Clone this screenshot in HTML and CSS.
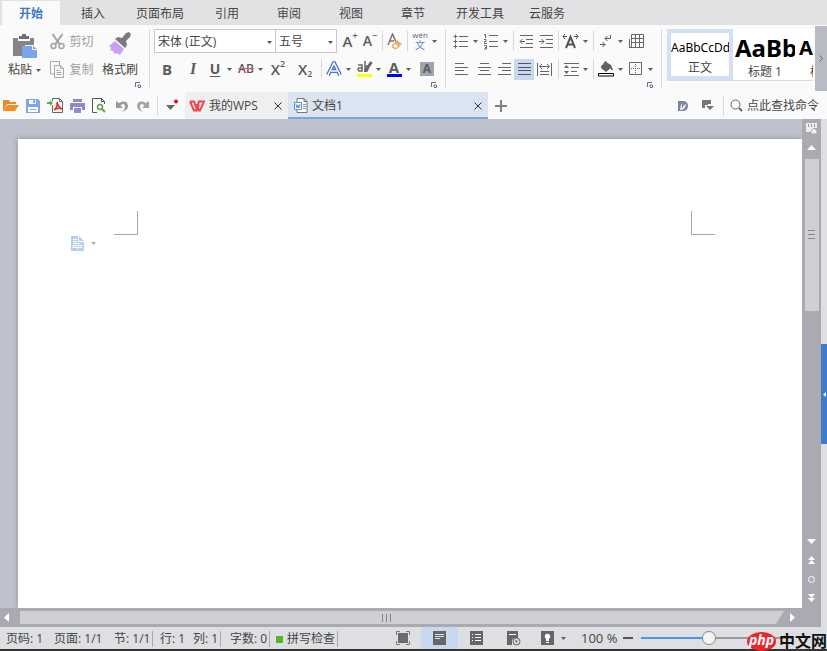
FILE: index.html
```html
<!DOCTYPE html>
<html lang="zh-CN">
<head>
<meta charset="utf-8">
<title>文档1</title>
<link rel="stylesheet" href="styles.css">
</head>
<body>
<svg class="defs" aria-hidden="true">
  <symbol id="arrow" viewBox="0 0 5 3"><path d="M0 0h5L2.500 3z" fill="#5d5d5d"/></symbol>
  <symbol id="launch" viewBox="0 0 6 6"><path d="M.5 5V.5H5M5.500 3v2.500H3M3 5V3h2" fill="none" stroke="#66708c"/></symbol>
  <symbol id="close" viewBox="0 0 8 8"><path d="M.5.5l7 7M7.500.5l-7 7" stroke="#333" fill="none"/></symbol>
</svg>

<nav class="tabs">
  <button class="tab current">开始</button><button class="tab">插入</button><button class="tab wide">页面布局</button><button class="tab">引用</button><button class="tab">审阅</button><button class="tab">视图</button><button class="tab">章节</button><button class="tab wide">开发工具</button><button class="tab">云服务</button>
</nav>

<section class="ribbon">
  <div class="group clipboard">
    <button class="big paste">
      <svg width="26" height="24"><path d="M1 4h5v3h12V4h4v7h-9v11H1z" fill="#858585"/><path d="M7 5V2h3V0h4v2h3v3z" fill="#707070"/><path d="M10 12h10v4h5v8H10z" fill="#7da4ea"/><path d="M21 12l4 3h-4z" fill="#7da4ea"/></svg>
      <span>粘贴 <svg width="5" height="3"><use href="#arrow"/></svg></span>
    </button>
    <div class="stack">
      <button class="line"><svg width="15" height="17" fill="none" stroke="#a2a2a2"><path d="M2.500 1l7 10M12.500 1l-7 10" stroke-width="2"/><circle cx="3.500" cy="13" r="2.500" stroke-width="1.500"/><circle cx="11.500" cy="13" r="2.500" stroke-width="1.500"/></svg>剪切</button>
      <button class="line"><svg width="15" height="17" fill="none" stroke="#a8a8a8"><path d="M4 13H.5V.5h9V4"/><path d="M4.500 4.500h6l3 3v9h-9zM10.500 4.500v3h3M6.500 9.500h4M6.500 11.500h5M6.500 13.500h5"/></svg>复制</button>
    </div>
    <button class="big painter">
      <svg width="24" height="24"><path d="M18 1l3-1 2 2-1 3-4 4 1 4-2 3-10-9 3-2 4 1z" fill="#7b7b7b"/><path d="M7 9l9 8-4 6-3-2-2 1-2-3-3-1 1-2-2-2z" fill="#c9a0f2"/></svg>
      <span>格式刷</span>
    </button>
    <button class="launcher" aria-label="剪贴板"><svg width="6" height="6"><use href="#launch"/></svg></button>
  </div>

  <div class="group font">
    <div class="row font-top">
      <label class="combo"><select aria-label="字体"><option>宋体 (正文)</option></select><svg width="5" height="3"><use href="#arrow"/></svg></label>
      <label class="combo"><select aria-label="字号"><option>五号</option></select><svg width="5" height="3"><use href="#arrow"/></svg></label>
      <i></i>
      <button class="tool glyph" aria-label="增大字号">A<sup>+</sup></button>
      <button class="tool glyph small" aria-label="减小字号">A<sup>−</sup></button>
      <i class="sep"></i>
      <button class="tool" aria-label="清除格式"><svg width="16" height="17" fill="none"><path d="M1 12L5.500 1 9 9M3 8h4" stroke="#777" stroke-width="1.500"/><path d="M5 12l5-5 5 4-5 5-2 .5-3-2z" fill="#f2ad69"/><path d="M6 13l2-2 3 2-2 2z" fill="#fff"/></svg></button>
      <i class="sep"></i>
      <button class="tool menu" aria-label="拼音指南"><span class="pinyin"><b>wén</b><span>文</span></span><svg width="5" height="3"><use href="#arrow"/></svg></button>
    </div>
    <div class="row font-bottom">
      <button class="tool letter">B</button>
      <button class="tool letter italic">I</button>
      <button class="tool menu letter"><u>U</u><svg width="5" height="3"><use href="#arrow"/></svg></button>
      <button class="tool menu struck"><s>AB</s><svg width="5" height="3"><use href="#arrow"/></svg></button>
      <button class="tool glyph">X<sup>2</sup></button>
      <button class="tool glyph">X<sub>2</sub></button>
      <i class="sep"></i>
      <button class="tool menu" aria-label="文字效果"><svg width="16" height="16" fill="none"><path d="M2 14L8 2l6 12M5 10h6" stroke="#4674c5" stroke-width="4"/><path d="M2 14L8 2l6 12M5 10h6" stroke="#fff" stroke-width="1.500"/></svg><svg width="5" height="3"><use href="#arrow"/></svg></button>
      <button class="tool menu" aria-label="突出显示"><span class="mark yellow"><svg width="16" height="11" fill="none"><path d="M1 4h4v6H2Q0 8 2 7h3M8 0v10h2q2-3 0-5H8" stroke="#666" stroke-width="1.500"/><path d="M14.500 1L9 9l-1 2" stroke="#666" stroke-width="3"/></svg></span><svg width="5" height="3"><use href="#arrow"/></svg></button>
      <button class="tool menu" aria-label="字体颜色"><span class="mark blue">A</span><svg width="5" height="3"><use href="#arrow"/></svg></button>
      <button class="tool"><span class="shade">A</span></button>
    </div>
    <button class="launcher" aria-label="字体设置"><svg width="6" height="6"><use href="#launch"/></svg></button>
  </div>

  <div class="group para">
    <div class="row para-top">
      <button class="tool menu" aria-label="项目符号"><svg width="16" height="15" stroke="#666" fill="none"><path d="M6 2.500h9M6 7.500h9M6 12.500h9"/><path d="M.5 2.500h4M.5 7.500h4M.5 12.500h4M2.500.5v4M2.500 5.500v4M2.500 10.500v4"/></svg><svg width="5" height="3"><use href="#arrow"/></svg></button>
      <button class="tool menu" aria-label="编号"><svg width="16" height="17" stroke="#666" fill="none"><path d="M6 2.500h9M6 8.500h9M6 13.500h9M1 1.500h1.500V5M1 6.500h2v2H1.500v2H4M1 12.500h2.500v3.500H1M2 14.500h1"/></svg><svg width="5" height="3"><use href="#arrow"/></svg></button>
      <i class="sep"></i>
      <button class="tool" aria-label="减少缩进"><svg width="14" height="13" stroke="#666" fill="none"><path d="M1 .5h13M7 4.500h7M7 8.500h7M1 12.500h13M1 6.500h5M3.500 4L1 6.500 3.500 9"/></svg></button>
      <button class="tool" aria-label="增加缩进"><svg width="14" height="13" stroke="#666" fill="none"><path d="M1 .5h13M7 4.500h7M7 8.500h7M1 12.500h13M0 6.500h5M2.500 4L5 6.500 2.500 9"/></svg></button>
      <i class="sep"></i>
      <button class="tool menu" aria-label="字符缩放"><svg width="18" height="16" fill="none" stroke="#555"><path d="M4 15L8.500 4 13 15M5.500 11.500h6" stroke-width="2"/><path d="M1 3.500h4M3 1L1 3.500 3 6M12 3.500h4M14 1l2 2.500L14 6"/></svg><svg width="5" height="3"><use href="#arrow"/></svg></button>
      <i class="sep"></i>
      <button class="tool menu" aria-label="显示标记"><svg width="12" height="14" stroke="#555" fill="none"><path d="M10.500 1v3.500H5M7.500 2L5 4.500 7.500 7M0 10.500h5M2.500 8L5 10.500 2.500 13"/></svg><svg width="5" height="3"><use href="#arrow"/></svg></button>
      <button class="tool" aria-label="表格"><svg width="15" height="15" stroke="#666" fill="none"><path d="M2.500.5h12v13h-12zM2 4.500h12M2 8.500h12M6.500 0v14M10.500 0v14M.5 5v9M0 13.500h3"/></svg></button>
    </div>
    <div class="row para-bottom">
      <button class="tool" aria-label="左对齐"><svg width="13" height="12" stroke="#666"><path d="M0 .5h9M0 4.500h13M0 7.500h9M0 11.500h13"/></svg></button>
      <button class="tool" aria-label="居中"><svg width="13" height="12" stroke="#666"><path d="M2 .5h9M0 4.500h13M2 7.500h9M0 11.500h13"/></svg></button>
      <button class="tool" aria-label="右对齐"><svg width="13" height="12" stroke="#666"><path d="M4 .5h9M0 4.500h13M4 7.500h9M0 11.500h13"/></svg></button>
      <button class="tool on" aria-label="两端对齐"><svg width="13" height="12" stroke="#555"><path d="M0 .5h13M0 4.500h13M0 7.500h13M0 11.500h13"/></svg></button>
      <button class="tool" aria-label="分散对齐"><svg width="15" height="13" stroke="#666" fill="none"><path d="M.5 0v13M14.500 0v13M3 3.500h9M5 1L2.500 3.500 5 6M10 1l2.500 2.500L10 6M3 8.500h9M3 11.500h9"/></svg></button>
      <i class="sep"></i>
      <button class="tool menu" aria-label="行距"><svg width="15" height="13" stroke="#666" fill="none"><path d="M0 .5h15M7 4.500h8M7 8.500h6M0 12.500h15"/><path d="M0 5h5L2.500 2zM0 8h5l-2.500 3z" fill="#666" stroke="none"/></svg><svg width="5" height="3"><use href="#arrow"/></svg></button>
      <i class="sep"></i>
      <button class="tool menu" aria-label="底纹"><svg width="16" height="16"><path d="M3 5l5-4 5 3 2 5h-2V7l-5 4-5-4zM5 3l2-3 2 1z" fill="#606060"/><path d="M.5 12.500h15v2.500H.5z" fill="#fff" stroke="#000"/></svg><svg width="5" height="3"><use href="#arrow"/></svg></button>
      <button class="tool menu" aria-label="边框"><svg width="14" height="14" fill="none" stroke="#666"><path d="M.5.5h12v12H.5z"/><path d="M6.500 2v10M2 6.500h10" stroke-dasharray="1 1"/></svg><svg width="5" height="3"><use href="#arrow"/></svg></button>
    </div>
    <button class="launcher" aria-label="段落设置"><svg width="6" height="6"><use href="#launch"/></svg></button>
  </div>

  <div class="styles">
    <button class="style chosen"><span class="sample">AaBbCcDd</span><span>正文</span></button>
    <button class="style"><span class="sample heading">AaBb</span><span>标题 1</span></button>
    <button class="style cut"><span class="sample medium">Aa</span><span class="name">标题 2</span></button>
  </div>
  <button class="more" aria-label="更多"><svg width="4" height="7" fill="none" stroke="#666"><path d="M.5.5l3 3-3 3"/></svg></button>
</section>

<section class="quick">
  <div class="files">
    <button aria-label="打开"><svg width="16" height="13"><path d="M0 12V1h6l1 2h6v2H4z" fill="#e88929"/><path d="M4 6h12l-4 6H0z" fill="#f58d21"/></svg></button>
    <button aria-label="保存"><svg width="14" height="14"><path d="M0 0h12l2 2v12H0z" fill="#7da5ea"/><path d="M3 1h7v4H3zM2 8h10v5H2z" fill="#fff"/><path d="M7 1h2v3H7zM4 10h6v1H4z" fill="#7da5ea"/></svg></button>
    <button aria-label="输出PDF"><svg width="17" height="15" fill="none"><path d="M5.500 7v7.500h10v-11l-3-3h-7V3M12.500.5v3h3" stroke="#666"/><path d="M0 4h3V2l3 3-3 3V6H0z" fill="#68a74c"/><path d="M7 12q4-3 3-8 1 5 5 7-4-2-8 1" stroke="#e02b20" stroke-width="1.500"/></svg></button>
    <button aria-label="打印"><svg width="15" height="14" fill="#8f8aca"><path d="M3 0h9v3H3zM0 4h15v7h-3V8H3v3H0zM4 9h7v5H4z"/></svg></button>
    <button aria-label="打印预览"><svg width="14" height="15" fill="none"><path d="M5 14.500H.5V.5h9l3 3V6M9.500.5v3h3" stroke="#555"/><circle cx="8" cy="9" r="2.500" stroke="#64a64b" stroke-width="1.500"/><path d="M10 11l3 3" stroke="#64a64b" stroke-width="2"/></svg></button>
    <button aria-label="撤销"><svg width="13" height="14"><path d="M1 2v7h7L5.500 6.500Q10 3 10 8q0 3-3 5 6-2 6-6Q12 0 4 4z" fill="#999"/></svg></button>
    <button aria-label="恢复"><svg width="13" height="14"><path d="M12 2v7H5l2.500-2.500Q3 3 3 8q0 3 3 5-6-2-6-6Q1 0 9 4z" fill="#a4a4a4"/></svg></button>
  </div>
  <i class="sep"></i>
  <button class="custom" aria-label="自定义"><svg width="14" height="14"><path d="M1 6h9l-4.500 5z" fill="#666"/><circle cx="11" cy="2.500" r="2" fill="#f00"/></svg></button>
  <div class="doc home"><svg width="16" height="12" fill="none" stroke="#f0484c"><path d="M1 1.500h4l3 8 2-5M1 1.500l4 9h2l3-9h5l-4 9h-1L7.500 4" stroke-width="2"/></svg><span>我的WPS</span><button aria-label="关闭"><svg width="8" height="8"><use href="#close"/></svg></button></div>
  <div class="doc active"><svg width="14" height="15" fill="none"><path d="M3 4V.5h7l3 3v11H3V12M10 .5v3h3" stroke="#777" fill="#fff"/><path d="M9 6.500h3M9 8.500h3M9 10.500h3" stroke="#999"/><path d="M.5 4.500h7v7h-7z" fill="#fff" stroke="#5c8fd6"/><path d="M2 6l1 4 1-3 1 3 1-4" stroke="#5c8fd6"/></svg><span>文档1</span><button aria-label="关闭"><svg width="8" height="8"><use href="#close"/></svg></button></div>
  <button class="add" aria-label="新建"><svg width="12" height="12" stroke="#808080" stroke-width="2"><path d="M0 6h12M6 0v12"/></svg></button>
  <div class="find">
    <button aria-label="文档服务"><svg width="10" height="10"><path d="M0 0h6q4 1 4 5t-4 5H0z" fill="#7e8497"/><path d="M2 9q0-4 2-7v6Q5 4 8 3 8 7 4 9" fill="#e8eaf0"/></svg></button>
    <button aria-label="皮肤"><svg width="13" height="11" fill="#777"><path d="M1 0h9v4H7v1H4v3H1zM5 6h8L9 10z"/></svg></button>
    <i class="sep"></i>
    <label for="command"><svg width="13" height="13" fill="none" stroke="#666"><circle cx="5.500" cy="5.500" r="4.500"/><path d="M9 9l3 3" stroke-width="2"/></svg></label>
    <input id="command" type="text" placeholder="点此查找命令">
  </div>
</section>

<main class="work">
  <div class="canvas">
    <article class="page">
      <div class="corners"><i class="corner"></i><i class="corner right"></i></div>
      <button class="section" aria-label="段落布局"><svg width="13" height="15"><path d="M0 0h8l5 5v10H0z" fill="#b8cdea"/><path d="M7.500 0v5.500H13M2 3.500h4M2 5.500h4M2 7.500h7M2 9.500h9v2H2zM6.500 11v2" fill="none" stroke="#fff"/></svg><svg width="5" height="3"><path d="M0 0h5L2.500 3z" fill="#aaa"/></svg></button>
    </article>
    <div class="vbar">
      <button class="ruler" aria-label="标尺"><svg width="12" height="12"><path d="M0 0h11v5H9L5 9H0z" fill="#eee"/><path d="M2.500 1v3M5.500 1v3M8.500 1v3" stroke="#999"/><path d="M5 11h6V8L8 5 5 8z" fill="#eee" stroke="#aaa"/></svg></button>
      <button aria-label="上"><svg width="9" height="5"><path d="M0 5h9L4.500 0z" fill="#fff"/></svg></button>
      <div class="thumb"><svg width="7" height="10" stroke="#888"><path d="M0 .5h7M0 4.500h7M0 8.500h7"/></svg></div>
      <div class="jump">
        <button aria-label="下"><svg width="9" height="5"><path d="M0 0h9L4.500 5z" fill="#fff"/></svg></button>
        <button aria-label="上一页"><svg width="7" height="9" fill="#fff"><path d="M0 4h7L3.500 0zM0 8h7L3.500 4z"/></svg></button>
        <button aria-label="选择对象"><svg width="7" height="7" fill="none" stroke="#fff"><circle cx="3.500" cy="3.500" r="3"/></svg></button>
        <button aria-label="下一页"><svg width="7" height="9" fill="#fff"><path d="M0 0h7L3.500 4zM0 4h7L3.500 8z"/></svg></button>
      </div>
    </div>
    <div class="hbar">
      <button aria-label="左"><svg width="5" height="9"><path d="M5 0v9L0 4.500z" fill="#fff"/></svg></button>
      <div class="hthumb"><svg width="10" height="8" stroke="#888"><path d="M.5 0v8M4.500 0v8M8.500 0v8"/></svg></div>
      <button class="next" aria-label="右"><svg width="5" height="9"><path d="M0 0v9l5-4.500z" fill="#fff"/></svg></button>
    </div>
  </div>
  <aside class="rail"><button aria-label="展开任务窗格"><svg width="3" height="5"><path d="M3 0v5L0 2.500z" fill="#fff"/></svg></button></aside>
</main>

<footer class="status">
  <div class="counts"><span>页码: 1</span><span>页面: 1/1</span><span class="rule">节: 1/1</span><span>行: 1</span><span class="rule">列: 1</span><span class="rule">字数: 0</span><span class="rule spell"><i></i>拼写检查</span></div>
  <div class="views">
    <button aria-label="全屏"><svg width="14" height="14"><path d="M2 2h10v10H2z" fill="#6b6b6b"/><path d="M.5 4V.5H4M10 .5h3.500V4M.5 10v3.500H4M10 13.500h3.500V10" fill="none" stroke="#777"/></svg></button>
    <button class="on" aria-label="页面视图"><svg width="13" height="14"><path d="M0 0h13v14H0z" fill="#666"/><path d="M2 3.500h9M2 5.500h9M2 7.500h5" stroke="#d7e3f5"/></svg></button>
    <button aria-label="大纲视图"><svg width="13" height="14"><path d="M0 0h13v14H0z" fill="#666"/><path d="M2 3.500h1M2 6.500h1M2 9.500h1M5 3.500h6M5 6.500h6M5 9.500h6" stroke="#fff"/></svg></button>
    <button aria-label="网页视图"><svg width="14" height="15"><path d="M0 0h11v7H7L5 9v5H0z" fill="#666"/><path d="M2 3.500h7" stroke="#fff"/><circle cx="9.500" cy="10.500" r="3.500" fill="#ddd" stroke="#666"/><path d="M8 9l3 1-2 2z" fill="#666"/></svg></button>
    <button class="care" aria-label="护眼模式"><svg width="13" height="14"><path d="M0 0h13v14H0z" fill="#666"/><path d="M5 10V8Q3 6 4 4q2-3 5 0 1 2-1 4v2zM5 11h3v1H5z" fill="#fff"/></svg><svg width="5" height="3"><use href="#arrow"/></svg></button>
  </div>
  <label class="percent" for="zoom">100 %</label>
  <button class="minus" aria-label="缩小"></button>
  <input id="zoom" type="range" min="0" max="100" value="44">
  <div class="brand"><b>php</b><span>中文网</span></div>
</footer>
</body>
</html>
```
FILE: styles.css
```css
* { box-sizing: border-box; }
body {
  margin: 0;
  height: 100vh;
  overflow: hidden;
  display: flex;
  flex-direction: column;
  background: #fafafa;
  color: #444;
  font: 12px/16px "Open Sans", "Noto Sans CJK SC", sans-serif;
}
button, select, input { font: inherit; color: inherit; border: 0; padding: 0; margin: 0; background: none; }
button { display: flex; align-items: center; justify-content: center; white-space: nowrap; }
svg { display: block; flex: none; }
.defs { position: absolute; width: 0; height: 0; }

.tabs { display: flex; height: 25px; flex: none; background: #e2e2e5; padding-left: 2px; }
.tab { width: 62px; padding-top: 2px; }
.tab.wide { width: 72px; }
.tab.current { width: 58px; background: #fafafa; color: #3c78c8; font-weight: 600; margin: 1px 2px 0 0; }

.ribbon { display: flex; height: 67px; flex: none; }
.group { position: relative; flex: none; margin-top: 4px; height: 59px; border-right: 1px solid #dcdcdc; }
.launcher { position: absolute; right: 8px; bottom: 0; }
.sep { width: 1px; height: 20px; background: #d8d8d8; }
.clipboard { display: flex; width: 150px; }
.big { flex-direction: column; justify-content: flex-start; height: 52px; padding-top: 5px; gap: 4px; }
.big span { display: flex; align-items: center; gap: 4px; }
.paste { width: 49px; }
.painter { width: 50px; padding-top: 3px; gap: 6px; }
.stack { width: 46px; }
.line { height: 24px; width: 46px; margin-bottom: 4px; padding-top: 1px; gap: 4px; color: #a0a0a0; }

.font { width: 296px; padding-left: 4px; }
.para { width: 216px; padding-left: 5px; }
.row { display: grid; height: 24px; margin-bottom: 4px; align-items: center; }
.font-top { grid-template-columns: 122px 61px 3px 20px 22px 3px 22px 3px 30px; }
.font-bottom { grid-template-columns: 26px 22px 31px 32px 27px 26px 3px 30px 30px 33px 20px; padding-left: 3px; }
.para-top { grid-template-columns: 30px 32px 3px 20px 22px 3px 32px 3px 30px 20px; }
.para-bottom { grid-template-columns: 23px 20px 20px 20px 24px 3px 32px 3px 30px 30px; }
.combo { position: relative; display: block; height: 24px; border: 1px solid #c9c9c9; background: #fff; }
.combo + .combo { margin-left: -1px; }
.combo select { appearance: none; width: 100%; height: 22px; padding: 1px 0 0 3px; display: block; }
.combo svg { position: absolute; right: 3px; top: 11px; }
.tool { width: 20px; height: 21px; color: #5c5c5c; }
.tool.menu { width: 30px; display: grid; grid-template-columns: 20px 5px; column-gap: 2px; justify-items: center; justify-content: start; }
.on { background: #c8d9ef; }
.glyph { font-weight: 600; font-size: 15px; }
.glyph.small { font-size: 14px; }
.glyph sup { font-size: 9px; line-height: 10px; align-self: flex-start; }
.glyph sub { font-size: 8px; line-height: 8px; align-self: flex-end; margin-bottom: 2px; }
.letter { font: bold 15px/16px "Open Sans", sans-serif; }
.italic { font: italic bold 16px/16px "Liberation Serif", serif; }
.letter u { font-size: 14px; text-underline-offset: 2px; }
.struck s { font-size: 12px; font-weight: 600; text-decoration-color: #e55; }
.pinyin { display: flex; flex-direction: column; align-items: center; color: #5b86cc; font-size: 10px; line-height: 12px; }
.pinyin b { color: #666; font-weight: 400; font-size: 8px; line-height: 8px; }
.mark { width: 15px; height: 16px; font: bold 15px/12px "Open Sans", sans-serif; border-bottom: 3px solid; text-align: center; }
.yellow { border-color: #ff0; }
.blue { border-color: #00f; }
.shade { width: 14px; height: 14px; background: #a0a4ad; font: bold 12px/14px "Open Sans", sans-serif; }

.styles { display: flex; flex: 1; min-width: 0; overflow: hidden; margin: 4px 2px 0 5px; height: 52px; background: #fff; border-bottom: 1px solid #dcdcdc; }
.style { flex: none; width: 66px; flex-direction: column; justify-content: flex-start; padding: 4px 4px 0 2px; overflow: hidden; }
.style.chosen { border: 4px solid #d3dff4; padding: 0; }
.style.cut { align-items: flex-start; padding-left: 0; }
.sample { width: 100%; height: 31px; line-height: 29px; overflow: hidden; color: #000; text-align: left; font-family: "Noto Sans", sans-serif; }
.sample.heading { font-weight: 700; font-size: 24px; }
.sample.medium { font-weight: 700; font-size: 20px; }
.style .name { padding-left: 11px; }
.more { flex: none; width: 12px; background: #b8bbc4; margin: 1px 0; }

.quick { display: flex; align-items: center; height: 27px; flex: none; }
.files { display: flex; }
.files button { width: 22px; height: 27px; }
.quick > .sep { margin-left: 3px; }
.custom { width: 27px; }
.doc { display: flex; align-items: center; height: 27px; padding: 0 6px; background: #efefef; gap: 4px; flex: none; }
.doc button { margin-left: auto; }
.home { width: 103px; padding-left: 4px; }
.doc.active { width: 200px; padding-top: 2px; background: #dbe5f1; border-bottom: 2px solid #7ca3dc; }
.add { width: 26px; }
.find { display: flex; align-items: center; margin-left: auto; gap: 6px; padding-right: 6px; }
.find button { width: 19px; }
.find input { width: 74px; margin-left: -2px; outline: 0; }
.find input::placeholder { color: #444; opacity: 1; }

.work { display: flex; flex: 1; min-height: 0; }
.canvas { flex: 1; min-width: 0; display: grid; grid-template: minmax(0, 1fr) 19px / minmax(0, 1fr) 19px; background: #bfc2cc; }
.page { margin: 20px 0 0 18px; padding-top: 72px; background: #fff; box-shadow: 0 0 6px #8c8e98; clip-path: inset(-6px 0 0 -6px); }
.corners { display: flex; justify-content: space-between; padding: 0 87px 0 96px; }
.corner { width: 24px; height: 24px; border: solid #a8a8a8; border-width: 0 1px 1px 0; }
.corner.right { border-width: 0 0 1px 1px; }
.section { margin: 1px 0 0 53px; gap: 7px; }
.vbar { display: flex; flex-direction: column; align-items: center; background: #aaaab3; }
.vbar button { height: 19px; width: 19px; }
.thumb { width: 14px; height: 152px; margin-top: 2px; background: #cfd0d4; display: flex; align-items: center; justify-content: center; }
.jump { margin-top: auto; }
.hbar { grid-column: 1 / 3; display: flex; align-items: center; background: #aaaab3; }
.hbar button { width: 20px; padding-right: 7px; height: 19px; }
.hbar .next { width: 37px; padding-right: 20px; }
.hthumb { flex: 1; height: 13px; background: #cfd0d4; display: flex; align-items: center; padding-right: 30px; justify-content: center; clip-path: polygon(0 0, 100% 0, calc(100% - 8px) 100%, 0 100%); }
.rail { width: 6px; background: #dedfe2; display: flex; align-items: center; padding-top: 42px; }
.rail button { width: 6px; height: 100px; background: #3f7bcc; }

.status { position: relative; flex: none; display: flex; align-items: center; height: 24px; background: #dedfe2; border-bottom: 2px solid #333; }
.counts { display: grid; grid-template-columns: 48px 60px 46px 33px 37px 46px 1fr; padding: 2px 0 0 6px; width: 384px; white-space: nowrap; }
.counts .rule { justify-self: start; padding-right: 2px; border-right: 1px solid #aaa; }
.spell { display: flex; align-items: center; gap: 4px; }
.spell i { width: 7px; height: 7px; background: #56b32f; }
.views { display: flex; }
.views button { width: 37px; height: 22px; }
.views .care { width: 40px; gap: 7px; padding-left: 2px; }
.percent { margin-left: 9px; width: 42px; font-size: 13px; white-space: nowrap; }
.minus { width: 10px; height: 2px; background: #555; }
#zoom { appearance: none; flex: 1; min-width: 0; height: 16px; margin: 0 34px 0 8px; background: linear-gradient(to right, #4b94e7 46%, #999 46%) center / 100% 2px no-repeat; }
#zoom::-webkit-slider-thumb { appearance: none; width: 14px; height: 14px; border: 1px solid #888; border-radius: 50%; background: #f4f4f4; }
.brand { position: absolute; right: 0; bottom: -2px; display: flex; align-items: center; gap: 3px; color: #111; }
.brand b { width: 29px; height: 19px; border-radius: 50%; background: #e8262b; color: #fff; font: italic bold 14px/16px "Open Sans", sans-serif; text-align: center; }
.brand span { font-size: 16px; font-weight: 700; line-height: 20px; }
```
